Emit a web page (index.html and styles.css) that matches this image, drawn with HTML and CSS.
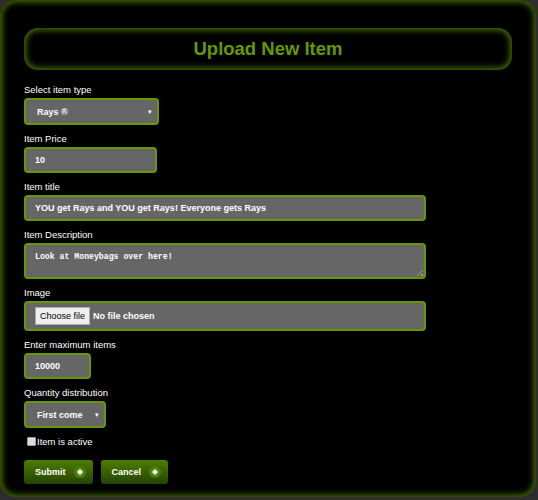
FILE: index.html
```html
<!DOCTYPE html>
<html lang="en">
<head>
    <meta charset="UTF-8">
    <meta name="viewport" content="width=device-width, initial-scale=1.0">
    <title>Upload New Item</title>
    <link rel="stylesheet" href="styles.css">
</head>
<body>
    <div id="content" class="panel">
        <h2 class="panel-title">Upload New Item</h2>

        <form id="itemForm" class="item-form">
            <div class="form-group">
                <label for="item_type">Select item type</label>
                <div class="select-box type-select">
                    <span>Rays &reg;</span>
                    <span class="caret">&#9662;</span>
                </div>
            </div>
            <div class="form-group">
                <label for="price">Item Price</label>
                <div class="input-box price-input">10</div>
            </div>
            <div class="form-group">
                <label for="title">Item title</label>
                <div class="input-box wide-input">YOU get Rays and YOU get Rays! Everyone gets Rays</div>
            </div>
            <div class="form-group">
                <label for="description">Item Description</label>
                <div class="input-box textarea-box">Look at Moneybags over here!<span class="grip"></span></div>
            </div>
            <div class="form-group">
                <label for="image">Image</label>
                <div class="input-box file-box">
                    <span class="file-btn">Choose file</span>
                    <span>No file chosen</span>
                </div>
            </div>
            <div class="form-group">
                <label for="max_items">Enter maximum items</label>
                <div class="input-box max-input">10000</div>
            </div>
            <div class="form-group">
                <label for="distribution">Quantity distribution</label>
                <div class="select-box dist-select">
                    <span>First come</span>
                    <span class="caret">&#9662;</span>
                </div>
            </div>
            <div class="check-row">
                <span class="checkbox"></span>
                <span>Item is active</span>
            </div>
            <div class="button-row">
                <button type="button" class="btn-green">Submit <span class="btn-icon"><svg width="6" height="6" viewBox="0 0 6 6"><path d="M3 0 L6 3 L3 6 L0 3 Z" fill="#fff"/></svg></span></button>
                <button type="button" class="btn-green">Cancel <span class="btn-icon"><svg width="6" height="6" viewBox="0 0 6 6"><path d="M3 0 L6 3 L3 6 L0 3 Z" fill="#fff"/></svg></span></button>
            </div>
        </form>
    </div>
</body>
</html>
```

FILE: styles.css
```css
body {
    margin: 0;
    background-color: #2e2e2e;
    font-family: "Liberation Sans", Arial, sans-serif;
    color: #fff;
}

.panel {
    width: 536px;
    height: 497px;
    box-sizing: border-box;
    padding: 28px 24px 0 24px;
    background-color: #000;
    border-radius: 16px;
    box-shadow: inset 0 0 6px 2px #4a7300;
}

.panel-title {
    margin: 0 0 13px 0;
    width: 488px;
    height: 42px;
    line-height: 41px;
    box-sizing: border-box;
    text-align: center;
    font-size: 18.5px;
    font-weight: bold;
    color: #669900;
    border-radius: 14px;
    box-shadow: inset 0 0 6px 2px #4a7300;
}

.item-form .form-group {
    display: flex;
    flex-direction: column;
    align-items: flex-start;
    margin-bottom: 7px;
}

    .item-form label {
        height: 14px;
        line-height: 14px;
        margin-bottom: 1px;
        font-size: 9.5px;
    }

.input-box,
.select-box {
    box-sizing: border-box;
    background-color: #666;
    border: 2px solid #669900;
    border-radius: 4px;
    font-size: 9px;
    font-weight: bold;
    color: #fff;
    padding: 0 9px;
    display: flex;
    align-items: center;
}

.select-box {
    height: 27px;
    justify-content: space-between;
    padding: 0 5px 0 11px;
}

    .select-box .caret {
        font-size: 7px;
        font-weight: normal;
    }

.type-select {
    width: 135px;
}

.dist-select {
    width: 82px;
}

.price-input {
    width: 133px;
    height: 26px;
}

.wide-input {
    width: 402px;
    height: 26px;
}

.textarea-box {
    position: relative;
    width: 402px;
    height: 36px;
    align-items: flex-start;
    padding-top: 7px;
    font-family: "Liberation Mono", monospace;
    font-size: 8.2px;
}

    .textarea-box .grip {
        position: absolute;
        right: 1px;
        bottom: 1px;
        width: 6px;
        height: 6px;
        background: linear-gradient(135deg, transparent 45%, #999 45%, #999 55%, transparent 55%, transparent 75%, #999 75%);
    }

.file-box {
    width: 402px;
    height: 30px;
    gap: 3px;
}

    .file-box .file-btn {
        background-color: #efefef;
        border: 1px solid #aaa;
        color: #000;
        font-weight: normal;
        padding: 3px 4px;
        font-size: 9px;
    }

.max-input {
    width: 67px;
    height: 26px;
}

.check-row {
    display: flex;
    align-items: center;
    gap: 1px;
    font-size: 9.5px;
    margin: 0 0 0 3px;
    height: 12px;
}

    .check-row .checkbox {
        width: 7px;
        height: 7px;
        background-color: #ddd;
        border: 1px solid #999;
        border-radius: 1px;
    }

.button-row {
    display: flex;
    gap: 8px;
    margin-top: 13px;
}

.btn-green {
    display: flex;
    align-items: center;
    gap: 8px;
    height: 24px;
    padding: 0 7px 0 11px;
    border: none;
    border-radius: 3px;
    background: linear-gradient(#4c7d00, #244300);
    color: #fff;
    font-family: "Liberation Sans", Arial, sans-serif;
    font-size: 9px;
    font-weight: bold;
    cursor: pointer;
}

.btn-icon {
    width: 12px;
    height: 12px;
    border-radius: 50%;
    background: radial-gradient(#5e9a12, #3d6a05);
    display: flex;
    align-items: center;
    justify-content: center;
}
```
